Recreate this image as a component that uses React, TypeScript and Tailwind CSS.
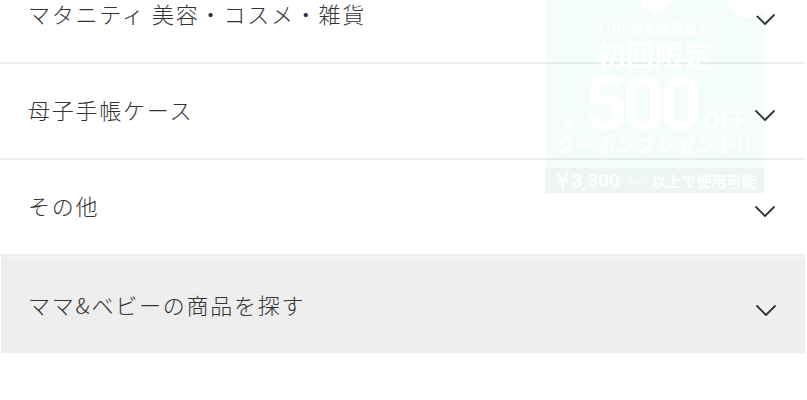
import type { ReactNode } from 'react';

const menuItems = [
  { id: 'maternity', label: 'マタニティ 美容・コスメ・雑貨' },
  { id: 'techo', label: '母子手帳ケース' },
  { id: 'other', label: 'その他' },
];

function Chevron() {
  return (
    <svg width="20" height="11" viewBox="0 0 20 11" fill="none" aria-hidden="true">
      <path d="M1 1l9 9 9-9" stroke="#333" strokeWidth="1.8" strokeLinecap="round" strokeLinejoin="round" />
    </svg>
  );
}

function MenuRow({ label, shaded = false }: { label: ReactNode; shaded?: boolean }) {
  return (
    <button
      type="button"
      className={
        shaded
          ? 'ml-px flex h-[97px] w-[804px] items-start justify-between border-t-[3px] border-[#f2f2f2] bg-[#eeeeee] pl-[27px] pr-[29px] text-left'
          : 'flex h-[96px] w-full items-start justify-between border-b-2 border-[#f0f0f0] bg-white pl-[28px] pr-[30px] text-left'
      }
    >
      <span className="pt-[30px] text-[22px] font-light leading-[30px] tracking-[0.08em] text-[#333]">{label}</span>
      <span className="pt-[46px]">
        <Chevron />
      </span>
    </button>
  );
}

function LineCouponBanner() {
  return (
    <aside className="pointer-events-none absolute left-[545px] top-0 flex h-[193px] w-[219px] flex-col items-center bg-[#06c755]/[0.04] font-bold text-white">
      <div className="absolute left-[182px] top-[-24px] size-[42px] rounded-full bg-white" />
      <svg className="absolute left-[95px] top-[-10px]" width="31" height="26" viewBox="0 0 31 26" aria-hidden="true">
        <path d="M15.5 0C7 0 0 4.6 0 10.5c0 5.2 5.4 9.4 12.6 10.3.5.1 1 .4.9 1l-.2 2.6c0 .6.4.9 1 .6 4.2-2.3 14.2-7.4 16-12.5.4-.6.7-1.3.7-2C31 4.6 24 0 15.5 0z" fill="#fff" />
      </svg>
      <p className="mt-[18px] whitespace-nowrap text-[13.5px] leading-[18px]">LINEお友達追加で</p>
      <p className="mt-[2px] whitespace-nowrap text-[29px] leading-[32px]">初回限定</p>
      <p className="mt-[-2px] flex h-[62px] items-baseline whitespace-nowrap font-['Roboto',sans-serif] leading-none">
        <span className="text-[17px]">￥</span>
        <span className="mx-[6px] text-[74px] tracking-[-5px]">500</span>
        <span className="text-[25px]">OFF</span>
      </p>
      <p className="mt-[2px] whitespace-nowrap text-[19px] leading-[24px] tracking-[0.06em]">クーポンプレゼント!!</p>
      <div className="mt-auto flex h-[25px] w-full items-center justify-center gap-[5px] whitespace-nowrap bg-[#1e3c28]/[0.035]">
        <span className="font-['Roboto',sans-serif] text-[19px] leading-none">￥3,300</span>
        <span className="text-[8px] font-normal leading-none">(税込)</span>
        <span className="text-[15px] leading-none">以上で使用可能</span>
      </div>
    </aside>
  );
}

export default function App() {
  return (
    <div className="relative h-[400px] w-[807px] overflow-hidden bg-white font-['Noto_Sans_CJK_JP','Noto_Sans',sans-serif]">
      <nav className="mr-[2px] mt-[-32px] flex flex-col">
        {menuItems.map((item) => (
          <MenuRow key={item.id} label={item.label} />
        ))}
        <MenuRow label="ママ&ベビーの商品を探す" shaded />
      </nav>
      <LineCouponBanner />
    </div>
  );
}
